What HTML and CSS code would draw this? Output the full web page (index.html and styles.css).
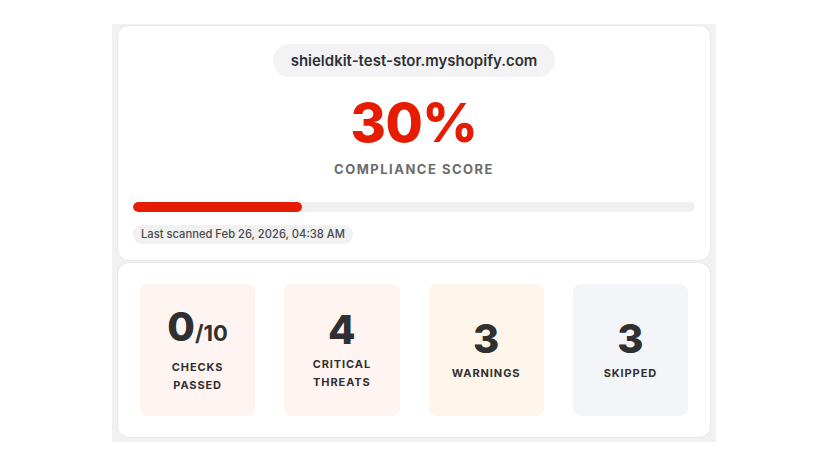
FILE: index.html
```html
<!DOCTYPE html>
<html>
<head>
<meta charset="utf-8">
<link rel="stylesheet" href="styles.css">
</head>
<body>
<div class="frame">
  <section class="card score-card">
    <div class="domain">shieldkit-test-stor.myshopify.com</div>
    <div class="score">30%</div>
    <div class="score-label">COMPLIANCE SCORE</div>
    <div class="bar"><div class="bar-fill" style="width:30%"></div></div>
    <div class="scanned">Last scanned Feb 26, 2026, 04:38 AM</div>
  </section>
  <section class="card stats-card">
    <div class="stat stat-pink">
      <div class="num">0<span class="den">/10</span></div>
      <div class="label">CHECKS<br>PASSED</div>
    </div>
    <div class="stat stat-pink">
      <div class="num">4</div>
      <div class="label">CRITICAL<br>THREATS</div>
    </div>
    <div class="stat stat-cream">
      <div class="num">3</div>
      <div class="label">WARNINGS</div>
    </div>
    <div class="stat stat-grey">
      <div class="num">3</div>
      <div class="label">SKIPPED</div>
    </div>
  </section>
</div>
</body>
</html>
```
FILE: styles.css
```css
* { box-sizing: border-box; }
html, body { margin: 0; padding: 0; background: #ffffff; }
body {
  font-family: Inter, "Noto Sans", "Liberation Sans", sans-serif;
  color: #303030;
  padding: 24px 0 0 112px;
}
.frame {
  width: 604px;
  background: #f1f1f1;
  padding: 1px 5px 4px 5px;
  display: flex;
  flex-direction: column;
  gap: 1px;
}
.card {
  background: #ffffff;
  border: 1px solid #e8e8e8;
  border-radius: 12px;
}
.score-card {
  display: flex;
  flex-direction: column;
  align-items: center;
  padding: 18px 15px 16px 15px;
}
.domain {
  background: #f3f3f5;
  border-radius: 17px;
  height: 33px;
  line-height: 33px;
  padding: 0 18px;
  font-size: 15px;
  font-weight: 600;
  color: #303030;
}
.score {
  margin-top: 19px;
  font-size: 54px;
  line-height: 54px;
  font-weight: 800;
  color: #e51c00;
  letter-spacing: -0.5px;
}
.score-label {
  margin-top: 11px;
  font-size: 13px;
  line-height: 16px;
  font-weight: 700;
  letter-spacing: 1.5px;
  color: #6b6b6b;
}
.bar {
  align-self: stretch;
  margin-top: 25px;
  height: 10px;
  border-radius: 5px;
  background: #f0f0f0;
  overflow: hidden;
}
.bar-fill {
  height: 100%;
  border-radius: 5px;
  background: #e51c00;
}
.scanned {
  align-self: flex-start;
  margin-top: 13px;
  background: #f1f1f1;
  border-radius: 9px;
  padding: 0 8px;
  height: 19px;
  line-height: 19px;
  font-size: 11.2px;
  font-weight: 500;
  color: #4a4a4a;
}
.stats-card {
  display: grid;
  grid-template-columns: repeat(4, 1fr);
  gap: 29px;
  padding: 21px 22px;
}
.stat {
  height: 132px;
  border-radius: 8px;
  display: flex;
  flex-direction: column;
  align-items: center;
  justify-content: center;
  gap: 5px;
}
.stat-pink { background: #fef4f2; }
.stat-cream { background: #fef6ea; }
.stat-grey { background: #f4f5f8; }
.num {
  font-size: 40px;
  line-height: 40px;
  font-weight: 800;
  color: #303030;
}
.den {
  font-size: 22px;
  font-weight: 700;
}
.label {
  font-size: 11px;
  line-height: 18px;
  font-weight: 700;
  letter-spacing: 0.9px;
  text-align: center;
  color: #303030;
}
```
